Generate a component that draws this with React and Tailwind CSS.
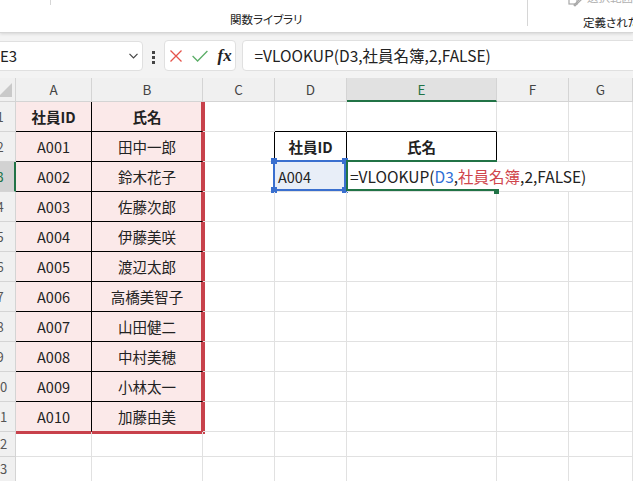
import React from 'react'

const PEOPLE = [
  ['A001', '田中一郎'],
  ['A002', '鈴木花子'],
  ['A003', '佐藤次郎'],
  ['A004', '伊藤美咲'],
  ['A005', '渡辺太郎'],
  ['A006', '高橋美智子'],
  ['A007', '山田健二'],
  ['A008', '中村美穂'],
  ['A009', '小林太一'],
  ['A010', '加藤由美'],
]

const COLS = ['A', 'B', 'C', 'D', 'E', 'F', 'G']
const GRID = 'grid grid-cols-[16px_76px_111px_72px_72px_150px_72px_1fr]'

function Ribbon() {
  return (
    <div className="relative z-10 flex h-[33px] bg-white border-b border-[#d6d6d6] shadow-[0_1px_3px_rgba(0,0,0,0.12)] text-[11.5px] text-[#222] [font-feature-settings:'palt']">
      <div className="self-start shrink-0 w-[51px] h-[5px] border-r border-[#d6d6d6] overflow-hidden">
        <div className="-mt-[13px] pl-[10px] leading-[15px]">日付</div>
      </div>
      <div className="self-start shrink-0 w-[477px] h-[26px] border-r border-[#d6d6d6] flex flex-col">
        <div className="h-[4px] overflow-hidden">
          <div className="flex -mt-[13px] leading-[15px]">
            <span className="ml-[9px] w-[24px]">論理</span>
            <span className="ml-[32px] w-[24px]">文字</span>
            <span className="ml-[114px] w-[21px]">日付</span>
            <span className="ml-[206px] w-[24px]">その</span>
          </div>
        </div>
        <div className="mt-[11px] pl-[179px] leading-[14px] whitespace-nowrap">関数ライブラリ</div>
      </div>
      <div className="flex-1 min-w-0 overflow-hidden flex flex-col">
        <div className="h-[7px] overflow-hidden">
          <div className="flex items-start -mt-[7px] leading-[15px] text-[#b0b0b0]">
            <span className="ml-[16px] w-[29px] -mt-[3px]">ーー</span>
            <span className="ml-[12px] w-[16px]">
              <svg width="15" height="15" viewBox="0 0 15 15" fill="none" stroke="#a8a8a8" strokeWidth="1.2">
                <rect x="1" y="2" width="8" height="9" />
                <path d="M6 12 L13 5 L14 6 L7 13 Z" />
              </svg>
            </span>
            <span className="ml-[4px] -mt-[3px] whitespace-nowrap">選択範囲</span>
          </div>
        </div>
        <div className="mt-[8px] pl-[55px] leading-[14px] whitespace-nowrap">定義された名前</div>
      </div>
    </div>
  )
}

function FormulaBar() {
  return (
    <div className="flex items-start h-[45px] bg-[#f3f3f3] overflow-hidden">
      <div className="mt-[8px] -ml-[7px] w-[150px] h-[30px] shrink-0 rounded-[4px] border border-[#e0e0e0] bg-white flex items-center pl-[6px] text-[15px] text-[#222]">
        E3
        <svg className="ml-auto mr-[4px]" width="9" height="6" viewBox="0 0 9 6" fill="none" stroke="#444" strokeWidth="1.2">
          <polyline points="0.5,0.8 4.5,4.8 8.5,0.8" />
        </svg>
      </div>
      <div className="ml-[9px] mt-[18px] flex flex-col gap-[2.5px]">
        <div className="w-[2.5px] h-[2.5px] bg-[#444]" />
        <div className="w-[2.5px] h-[2.5px] bg-[#444]" />
        <div className="w-[2.5px] h-[2.5px] bg-[#444]" />
      </div>
      <div className="ml-[9px] mt-[7px] w-[72px] h-[31px] shrink-0 rounded-[4px] border border-[#e0e0e0] bg-white flex items-center pl-[5px]">
        <svg width="12" height="12" viewBox="0 0 12 12" fill="none" stroke="#e5534b" strokeWidth="1.3">
          <path d="M0.5 0.5 L11.5 11.5 M11.5 0.5 L0.5 11.5" />
        </svg>
        <svg className="ml-[10px]" width="16" height="12" viewBox="0 0 16 12" fill="none" stroke="#5cae68" strokeWidth="1.3">
          <polyline points="0.6,6 5.6,11 15.4,1" />
        </svg>
        <span className="ml-[10px] font-['Liberation_Serif',serif] italic font-bold text-[17px] leading-none text-[#222]">fx</span>
      </div>
      <div className="ml-[6px] mt-[7px] h-[31px] flex-1 -mr-[10px] rounded-[4px] border border-[#e0e0e0] bg-white flex items-center pl-[12px] text-[15.5px] text-[#222] whitespace-nowrap">
        =VLOOKUP(D3,社員名簿,2,FALSE)
      </div>
    </div>
  )
}

function HeaderRow() {
  return (
    <div className={`${GRID} h-[24px] text-[13.5px] text-[#444]`}>
      <div className="relative bg-[#f0f0f0] border-r border-b border-[#d4d4d4] overflow-hidden">
        <svg className="absolute left-0 top-0" width="15" height="23" viewBox="0 0 15 23">
          <polygon points="12,5 12,19 -2,19" fill="#c9c9c9" />
        </svg>
      </div>
      {COLS.map((c) =>
        c === 'E' ? (
          <div key={c} className="flex items-center justify-center bg-[#e1e1e1] border-r border-[#d4d4d4] border-b-2 border-b-[#217346] text-[#217346]">
            {c}
          </div>
        ) : (
          <div key={c} className="flex items-center justify-center bg-[#f0f0f0] border-r border-b border-[#d4d4d4]">
            {c}
          </div>
        )
      )}
    </div>
  )
}

function RowHeader({ n }) {
  if (n === 3) {
    return (
      <div className="flex items-center overflow-hidden bg-[#d2d2d2] border-b border-[#d4d4d4] border-r-2 border-r-[#217346] text-[13px] text-[#217346]">
        <div className="w-[30px] shrink-0 -ml-[15px] text-center">{n}</div>
      </div>
    )
  }
  return (
    <div className="flex items-center overflow-hidden bg-[#f0f0f0] border-r border-b border-[#d4d4d4] text-[13px] text-[#555]">
      <div className="w-[30px] shrink-0 -ml-[15px] text-center">{n}</div>
    </div>
  )
}

function TableCell({ r, c, children }) {
  const last = r === 11
  let cls = 'flex items-center justify-center bg-[#fbe9e9] border-r border-b '
  if (c === 0) {
    cls += last
      ? 'border-r-black border-b-[#c8414b] shadow-[0_2px_0_#c8414b]'
      : 'border-r-black border-b-black'
  } else {
    cls += last
      ? 'border-r-[#c8414b] border-b-[#c8414b] shadow-[2px_0_0_#c8414b,0_2px_0_#c8414b,2px_2px_0_#c8414b,inset_-1px_0_0_#c8414b]'
      : 'border-r-[#c8414b] border-b-black shadow-[2px_0_0_#c8414b,inset_-1px_0_0_#c8414b]'
  }
  if (r === 1) cls += ' font-bold'
  return <div className={cls}>{children}</div>
}

function Plain({ extra = '', children }) {
  return <div className={`relative border-r border-b border-[#e1e1e1] ${extra}`}>{children}</div>
}

function SheetRow({ r }) {
  const h = r <= 11 ? 'h-[30px]' : 'h-[25px]'
  const person = r >= 2 && r <= 11 ? PEOPLE[r - 2] : null
  return (
    <div className={`${GRID} ${h} text-[14.5px] text-[#222]`}>
      <RowHeader n={r} />
      {r <= 11 ? (
        <>
          <TableCell r={r} c={0}>{r === 1 ? '社員ID' : person[0]}</TableCell>
          <TableCell r={r} c={1}>{r === 1 ? '氏名' : person[1]}</TableCell>
        </>
      ) : (
        <>
          <Plain />
          <Plain />
        </>
      )}
      {r === 2 ? <Plain extra="border-r-black" /> : <Plain />}
      {r === 1 && <Plain extra="border-b-black" />}
      {r === 2 && (
        <Plain extra="border-r-black border-b-black font-bold flex items-center justify-center">社員ID</Plain>
      )}
      {r === 3 && (
        <Plain extra="bg-[#e8eef8] flex items-center pl-[3px]">
          A004
          <div className="absolute -left-[2px] -top-[2px] right-0 bottom-0 border-2 border-[#3a6fcf]" />
          <div className="absolute -left-[4px] -top-[4px] w-[6px] h-[6px] bg-[#3a6fcf]" />
          <div className="absolute -right-[2px] -top-[4px] w-[6px] h-[6px] bg-[#3a6fcf]" />
          <div className="absolute -left-[4px] -bottom-[2px] w-[6px] h-[6px] bg-[#3a6fcf]" />
          <div className="absolute -right-[2px] -bottom-[2px] w-[6px] h-[6px] bg-[#3a6fcf]" />
        </Plain>
      )}
      {r > 3 && <Plain />}
      {r === 1 && <Plain extra="border-b-black" />}
      {r === 2 && (
        <Plain extra="border-r-black border-b-black font-bold flex items-center justify-center">氏名</Plain>
      )}
      {r === 3 && (
        <Plain>
          <div className="absolute left-[1px] top-0 bottom-0 z-10 flex items-center pl-[2px] pr-[4px] bg-white whitespace-nowrap text-[15.5px]">
            =VLOOKUP(<span className="text-[#2f6fd6]">D3</span>,<span className="text-[#d0454c]">社員名簿</span>,2,FALSE)
          </div>
          <div className="absolute z-20 -left-[1px] -top-[2px] -right-[1px] bottom-0 border-t-2 border-b-2 border-l-2 border-[#217346]" />
          <div className="absolute z-20 -right-[3px] -bottom-[3px] w-[5px] h-[5px] bg-[#217346]" />
        </Plain>
      )}
      {r > 3 && <Plain />}
      <Plain />
      <Plain />
    </div>
  )
}

export default function App() {
  const rows = Array.from({ length: 13 }, (_, i) => i + 1)
  return (
    <div className="w-[633px] h-[481px] overflow-hidden bg-white font-['Noto_Sans_CJK_JP',sans-serif]">
      <Ribbon />
      <FormulaBar />
      <HeaderRow />
      {rows.map((r) => (
        <SheetRow key={r} r={r} />
      ))}
    </div>
  )
}
